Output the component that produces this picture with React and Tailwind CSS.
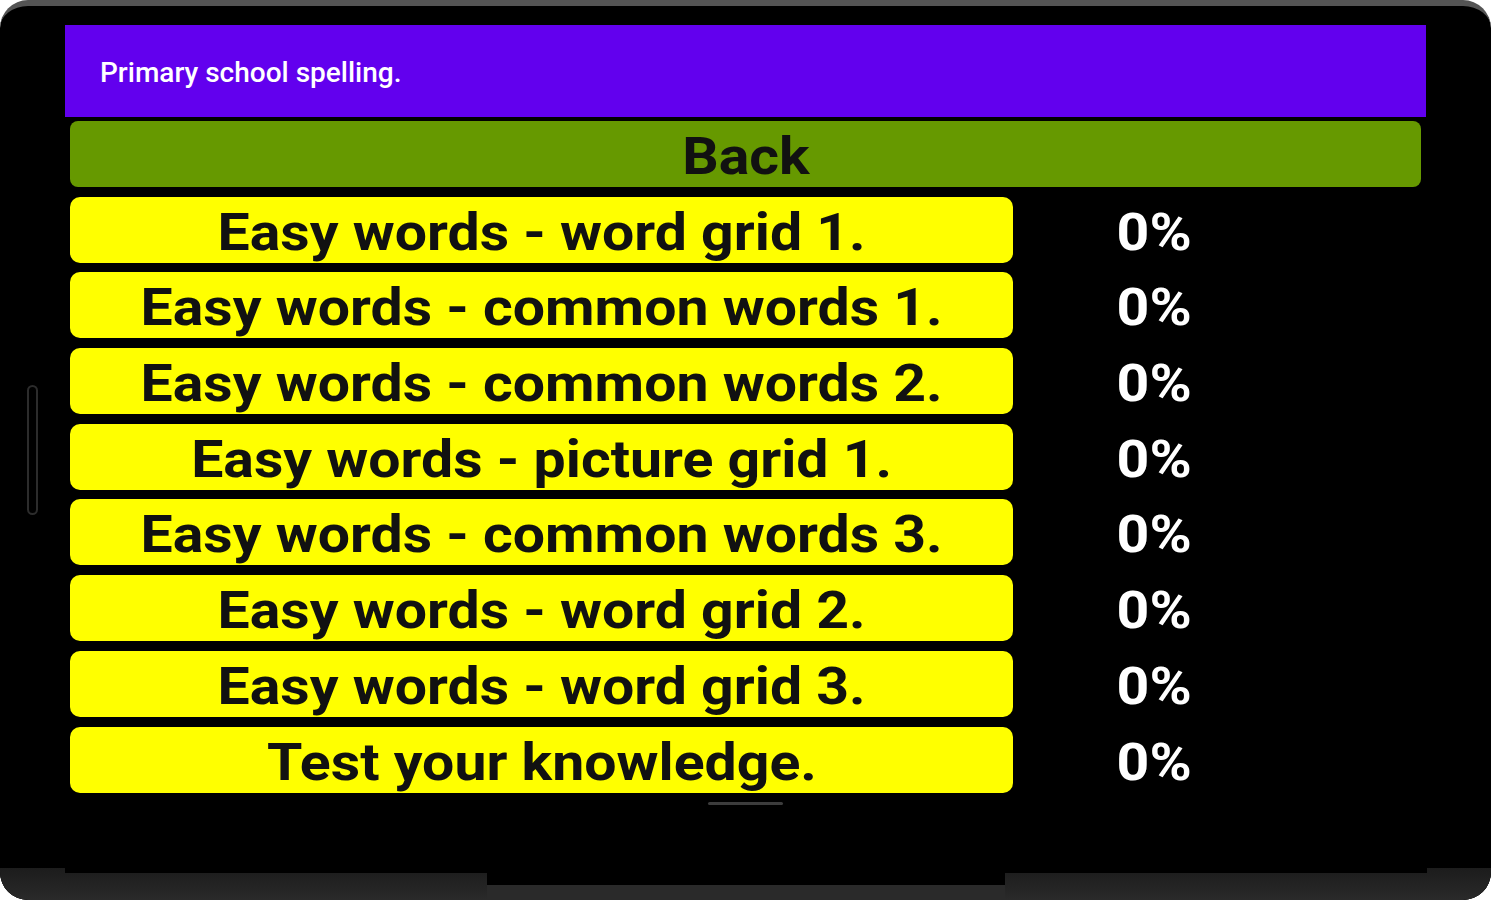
import React from 'react';

const lessons = [
    {title: 'Easy words - word grid 1.', score: '0%'},
    {title: 'Easy words - common words 1.', score: '0%'},
    {title: 'Easy words - common words 2.', score: '0%'},
    {title: 'Easy words - picture grid 1.', score: '0%'},
    {title: 'Easy words - common words 3.', score: '0%'},
    {title: 'Easy words - word grid 2.', score: '0%'},
    {title: 'Easy words - word grid 3.', score: '0%'},
    {title: 'Test your knowledge.', score: '0%'},
];

const LessonRow = ({title, score}) => (
    <div className="flex h-[66px]">
        <button className="w-[943px] h-full pt-[6px] rounded-[10px] bg-[#ffff00] text-[#111] text-[52px] font-bold leading-none flex items-center justify-center">
            <span className="inline-block scale-x-[1.1] whitespace-nowrap">{title}</span>
        </button>
        <div className="w-[282px] pt-[6px] flex items-center justify-center text-white text-[52px] font-bold leading-none">
            <span className="inline-block scale-x-[1.1]">{score}</span>
        </div>
    </div>
);

const App = () => {
    return (
        <div className="w-[1491px] h-[900px] bg-white overflow-hidden" style={{fontFamily: 'Roboto, "Noto Sans", sans-serif'}}>
            <div className="relative w-full h-full rounded-[28px] bg-black border-t-[6px] border-[#545454] flex flex-col overflow-hidden">
                {/* side button */}
                <div className="absolute left-[27px] top-[379px] w-[11px] h-[130px] rounded-full border-2 border-[#2c2c2c]"/>

                <div className="px-[65px] pt-[19px]">
                    <div className="h-[92px] bg-[#6200ee] pl-[35px] pt-[4px] flex items-center">
                        <span className="text-white text-[28px] font-medium">Primary school spelling.</span>
                    </div>

                    <div className="px-[5px] pt-[4px] flex flex-col gap-[9.7px]">
                        <button className="h-[66px] w-full pt-[6px] rounded-[8px] bg-[#669900] text-[#111] text-[52px] font-bold leading-none flex items-center justify-center">
                            <span className="inline-block scale-x-[1.1]">Back</span>
                        </button>
                        {lessons.map((lesson) => (
                            <LessonRow key={lesson.title} title={lesson.title} score={lesson.score}/>
                        ))}
                    </div>

                    <div className="mx-auto mt-[9px] w-[75px] h-[3px] rounded-full bg-[#3c3c3c]"/>
                </div>

                {/* bottom bezel */}
                <div className="mt-auto h-[32px] flex bg-black">
                    <div className="w-[65px] h-full bg-gradient-to-b from-[#1c1c1c] to-[#2a2a2a]"/>
                    <div className="w-[422px] mt-[5px] bg-gradient-to-b from-[#1e1e1e] to-[#2a2a2a]"/>
                    <div className="w-[518px] flex flex-col">
                        <div className="h-[17px] bg-black"/>
                        <div className="flex-1 bg-[#2a2a2a]"/>
                    </div>
                    <div className="w-[422px] mt-[5px] bg-gradient-to-b from-[#1e1e1e] to-[#2a2a2a]"/>
                    <div className="flex-1 h-full bg-gradient-to-b from-[#1c1c1c] to-[#2a2a2a]"/>
                </div>
            </div>
        </div>
    );
};

export default App;
